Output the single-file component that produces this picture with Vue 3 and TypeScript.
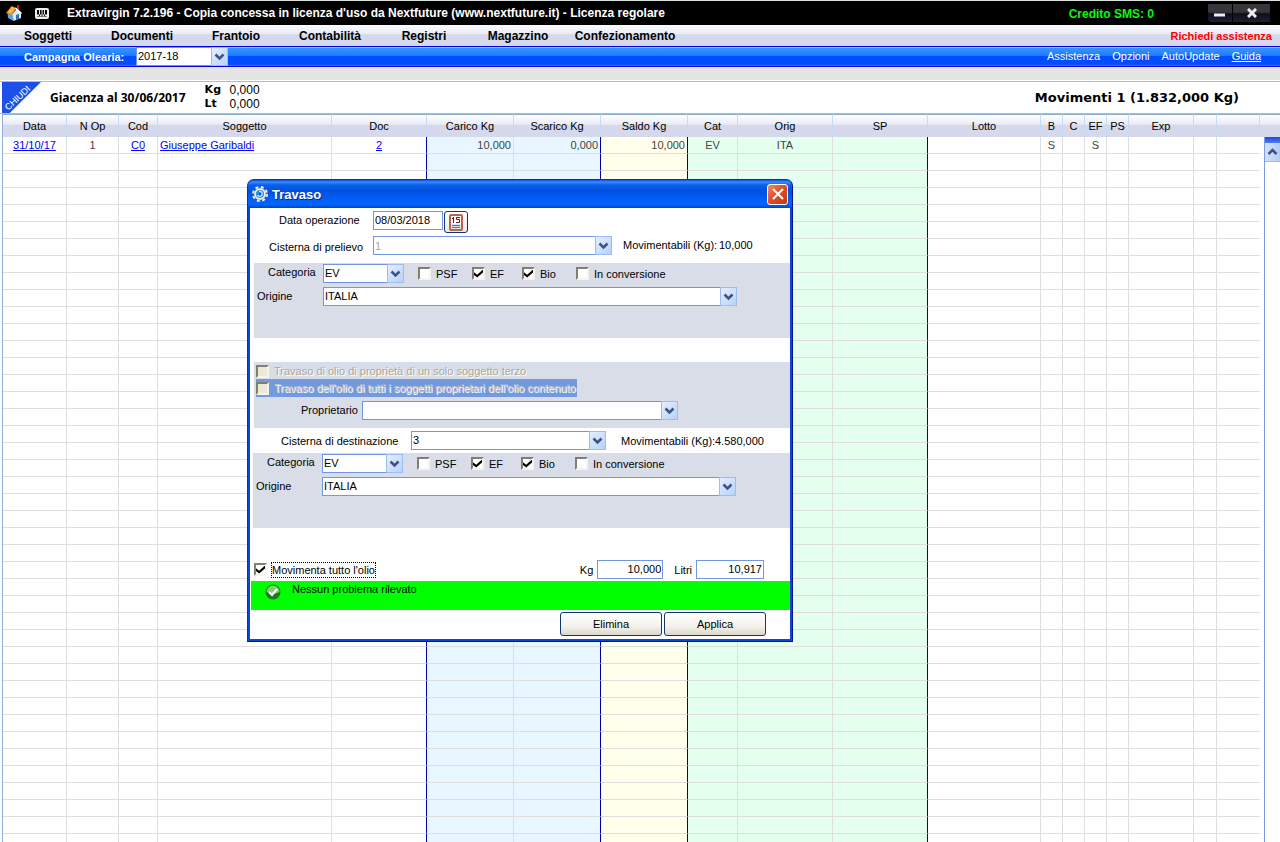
<script setup lang="ts">
import { ref } from 'vue'

interface Column {
  key: string
  label: string
  width?: number
  align?: 'right' | 'left'
  tint?: 'blue' | 'yellow' | 'green'
  strong?: boolean
  link?: boolean
}

const menu: string[] = ['Soggetti', 'Documenti', 'Frantoio', 'Contabilità', 'Registri', 'Magazzino', 'Confezionamento']
const links: string[] = ['Assistenza', 'Opzioni', 'AutoUpdate', 'Guida']

const columns: Column[] = [
  { key: 'data', label: 'Data', width: 64, link: true },
  { key: 'nop', label: 'N Op', width: 52 },
  { key: 'cod', label: 'Cod', width: 39, link: true },
  { key: 'soggetto', label: 'Soggetto', width: 174, align: 'left', link: true },
  { key: 'doc', label: 'Doc', width: 95, strong: true, link: true },
  { key: 'carico', label: 'Carico Kg', width: 87, align: 'right', tint: 'blue' },
  { key: 'scarico', label: 'Scarico Kg', width: 87, align: 'right', tint: 'blue', strong: true },
  { key: 'saldo', label: 'Saldo Kg', width: 87, align: 'right', tint: 'yellow', strong: true },
  { key: 'cat', label: 'Cat', width: 50, tint: 'green' },
  { key: 'orig', label: 'Orig', width: 95, tint: 'green' },
  { key: 'sp', label: 'SP', width: 95, tint: 'green', strong: true },
  { key: 'lotto', label: 'Lotto' },
  { key: 'b', label: 'B', width: 22 },
  { key: 'c', label: 'C', width: 22 },
  { key: 'ef', label: 'EF', width: 22 },
  { key: 'ps', label: 'PS', width: 22 },
  { key: 'exp', label: 'Exp', width: 65 },
  { key: 'x1', label: '', width: 23 },
  { key: 'x2', label: '', width: 43 },
]

const movement: Record<string, string> = {
  data: '31/10/17', nop: '1', cod: 'C0', soggetto: 'Giuseppe Garibaldi', doc: '2',
  carico: '10,000', scarico: '0,000', saldo: '10,000', cat: 'EV', orig: 'ITA', b: 'S', ef: 'S',
}
const rows: Record<string, string>[] = [movement, ...Array.from({ length: 41 }, () => ({}))]

const source = ref({ psf: false, ef: true, bio: true, conv: false })
const target = ref({ psf: false, ef: true, bio: true, conv: false })
const moveAll = ref(true)
</script>

<template>
  <div class="app">
    <header class="titlebar">
      <svg class="home" viewBox="0 0 16 16" width="16" height="16" aria-hidden="true">
        <rect x="11" y="0" width="2" height="6" fill="#d01818" />
        <path d="M1.500 8 L7 9 L7.500 16 L2 13Z" fill="#5ba3e6" />
        <path d="M6.500 9 L10.500 4 L15 8 L15 13 L7.500 16Z" fill="#d9ecfb" />
        <path d="M10 10 L13 9 V14 L10 15Z" fill="#2f6fb8" />
        <path d="M0 8 L5.500 1 L10.500 3 L6 10Z" fill="#f08a1c" />
        <path d="M1.500 7.500 L6 2 L9 3.200 L5 8.500Z" fill="#ffb648" />
        <path d="M9.500 3 L15.500 8.500" stroke="#fff" stroke-width="1.500" fill="none" />
      </svg>
      <svg class="port" viewBox="0 0 14 11" width="14" height="11" aria-hidden="true">
        <rect x="1" y="1" width="12" height="9" rx="1" fill="#000" stroke="#eee" stroke-width="2" />
        <path d="M4.500 1v5M7 1v5M9.500 1v5" stroke="#eee" stroke-width="1" />
        <path d="M2 7.500h10" stroke="#eee" stroke-width="2" />
        <path d="M4 7.500h1M6.500 7.500h1M9 7.500h1" stroke="#111" />
      </svg>
      <h1>Extravirgin 7.2.196 - Copia concessa in licenza d'uso da Nextfuture (www.nextfuture.it) - Licenza regolare</h1>
      <span class="credit">Credito SMS: 0</span>
      <div class="winbtns">
        <button type="button" aria-label="Riduci a icona"><svg viewBox="0 0 12 10" width="12" height="10"><path d="M0 7h11" stroke="#eee" stroke-width="3" /></svg></button>
        <button type="button" aria-label="Chiudi programma"><svg viewBox="0 0 10 10" width="10" height="10"><path d="M1 1l8 8M9 1l-8 8" stroke="#eee" stroke-width="3" /></svg></button>
      </div>
    </header>

    <nav class="menubar">
      <button v-for="m in menu" :key="m" type="button">{{ m }}</button>
      <a class="help" href="#">Richiedi assistenza</a>
    </nav>

    <div class="bluebar">
      <label for="campagna">Campagna Olearia:</label>
      <span class="combo season">
        <select id="campagna"><option>2017-18</option></select>
        <span class="drop"><svg viewBox="0 0 11 8" width="11" height="8"><path d="M1.500 1.500l4 4 4-4" /></svg></span>
      </span>
      <div class="links">
        <a v-for="l in links" :key="l" href="#" :class="{ under: l === 'Guida' }">{{ l }}</a>
      </div>
    </div>

    <div class="strip"></div>

    <section class="summary">
      <button type="button" class="corner"><span>CHIUDI</span></button>
      <strong class="stock">Giacenza al 30/06/2017</strong>
      <dl>
        <dt>Kg</dt><dd>0,000</dd>
        <dt>Lt</dt><dd>0,000</dd>
      </dl>
      <strong class="moves">Movimenti 1 (1.832,000 Kg)</strong>
    </section>

    <main class="grid">
      <table>
        <colgroup>
          <col v-for="c in columns" :key="c.key" :style="c.width ? { width: c.width + 'px' } : {}" />
        </colgroup>
        <thead>
          <tr><th v-for="c in columns" :key="c.key" scope="col">{{ c.label }}</th></tr>
        </thead>
        <tbody>
          <tr v-for="(r, i) in rows" :key="i">
            <td v-for="c in columns" :key="c.key" :class="[c.tint, c.align, { strong: c.strong }]">
              <a v-if="c.link && r[c.key]" href="#">{{ r[c.key] }}</a>
              <template v-else>{{ r[c.key] }}</template>
            </td>
          </tr>
        </tbody>
      </table>
      <div class="side">
        <div class="sidehead"></div>
        <div class="scroll">
          <div class="cap"></div>
          <button type="button" aria-label="Scorri in alto"><svg viewBox="0 0 11 8" width="11" height="8"><path d="M1.500 6l4-4 4 4" fill="none" stroke="#3d5285" stroke-width="2.500" /></svg></button>
        </div>
      </div>
    </main>

    <form class="dialog" role="dialog" aria-labelledby="dlg-title" @submit.prevent>
      <div class="caption">
        <svg viewBox="0 0 16 16" width="16" height="16" aria-hidden="true">
          <circle cx="8" cy="8" r="6.500" fill="none" stroke="#f2f0e6" stroke-width="3" stroke-dasharray="2.700 2.405" />
          <circle cx="8" cy="8" r="6" fill="#f2f0e6" stroke="#8c8a80" stroke-width=".5" />
          <circle cx="8" cy="8" r="4" fill="#1f8cf2" />
          <path d="M7 5.500a2.500 2.500 0 1 1-1.500 3.500" fill="none" stroke="#c8ecff" stroke-width="1.200" />
          <circle cx="8" cy="8" r="1" fill="#08468f" />
        </svg>
        <h2 id="dlg-title">Travaso</h2>
        <button type="button" class="close" aria-label="Chiudi"><svg viewBox="0 0 12 12" width="12" height="12"><path d="M1 1l10 10M11 1l-10 10" stroke="#fff" stroke-width="2" /></svg></button>
      </div>

      <div class="body">
        <div class="row date">
          <label for="data">Data operazione</label>
          <input id="data" type="text" value="08/03/2018" />
          <button type="button" class="calendar" aria-label="Calendario">
            <svg viewBox="0 0 14 17" width="14" height="17">
              <rect x="1" y="1" width="12" height="15" rx="1" fill="#dfe6f4" stroke="#b8644c" stroke-width="2" />
              <rect x="2" y="2" width="10" height="8" fill="#fff" />
              <path d="M3 4.500h1.500M4.500 3v6M11 3.500H7.500v2H10.500v3H7" fill="none" stroke="#8c1018" />
              <path d="M3 11.500h8M3 13.500h8" stroke="#5a6a94" />
            </svg>
          </button>
        </div>

        <div class="row tank">
          <label for="prelievo">Cisterna di prelievo</label>
          <span class="combo">
            <select id="prelievo" disabled><option>1</option></select>
            <span class="drop"><svg viewBox="0 0 11 8" width="11" height="8"><path d="M1.500 1.500l4 4 4-4" /></svg></span>
          </span>
          <span class="avail">Movimentabili (Kg):</span><output>10,000</output>
        </div>

        <fieldset class="panel">
          <div class="row cat">
            <label for="cat1">Categoria</label>
            <span class="combo">
              <select id="cat1"><option>EV</option></select>
              <span class="drop"><svg viewBox="0 0 11 8" width="11" height="8"><path d="M1.500 1.500l4 4 4-4" /></svg></span>
            </span>
            <label class="check"><input v-model="source.psf" type="checkbox" />PSF</label>
            <label class="check"><input v-model="source.ef" type="checkbox" />EF</label>
            <label class="check"><input v-model="source.bio" type="checkbox" />Bio</label>
            <label class="check"><input v-model="source.conv" type="checkbox" />In conversione</label>
          </div>
          <div class="row origin">
            <label for="orig1">Origine</label>
            <span class="combo">
              <select id="orig1"><option>ITALIA</option></select>
              <span class="drop"><svg viewBox="0 0 11 8" width="11" height="8"><path d="M1.500 1.500l4 4 4-4" /></svg></span>
            </span>
          </div>
        </fieldset>

        <fieldset class="panel owners">
          <label class="check off"><input type="checkbox" disabled />Travaso di olio di proprietà di un solo soggetto terzo</label>
          <label class="check off picked"><input type="checkbox" disabled />Travaso dell'olio di tutti i soggetti proprietari dell'olio contenuto</label>
          <div class="row owner">
            <label for="prop">Proprietario</label>
            <span class="combo">
              <select id="prop"><option></option></select>
              <span class="drop"><svg viewBox="0 0 11 8" width="11" height="8"><path d="M1.500 1.500l4 4 4-4" /></svg></span>
            </span>
          </div>
        </fieldset>

        <div class="row dest">
          <label for="dest">Cisterna di destinazione</label>
          <span class="combo">
            <select id="dest"><option>3</option></select>
            <span class="drop"><svg viewBox="0 0 11 8" width="11" height="8"><path d="M1.500 1.500l4 4 4-4" /></svg></span>
          </span>
          <span class="avail">Movimentabili (Kg):</span><output>4.580,000</output>
        </div>

        <fieldset class="panel second">
          <div class="row cat">
            <label for="cat2">Categoria</label>
            <span class="combo">
              <select id="cat2"><option>EV</option></select>
              <span class="drop"><svg viewBox="0 0 11 8" width="11" height="8"><path d="M1.500 1.500l4 4 4-4" /></svg></span>
            </span>
            <label class="check"><input v-model="target.psf" type="checkbox" />PSF</label>
            <label class="check"><input v-model="target.ef" type="checkbox" />EF</label>
            <label class="check"><input v-model="target.bio" type="checkbox" />Bio</label>
            <label class="check"><input v-model="target.conv" type="checkbox" />In conversione</label>
          </div>
          <div class="row origin">
            <label for="orig2">Origine</label>
            <span class="combo">
              <select id="orig2"><option>ITALIA</option></select>
              <span class="drop"><svg viewBox="0 0 11 8" width="11" height="8"><path d="M1.500 1.500l4 4 4-4" /></svg></span>
            </span>
          </div>
        </fieldset>

        <div class="row totals">
          <label class="check"><input v-model="moveAll" type="checkbox" /><span class="focus">Movimenta tutto l'olio</span></label>
          <label for="kg">Kg</label>
          <input id="kg" type="text" value="10,000" />
          <label for="litri">Litri</label>
          <input id="litri" type="text" value="10,917" />
        </div>

        <div class="status" role="status">
          <svg viewBox="0 0 16 16" width="16" height="16" aria-hidden="true">
            <circle cx="8" cy="8" r="7.500" fill="#1f7a1f" />
            <path d="M1.500 8a6.500 6.500 0 0 1 13 0q-6.500 3-13 0z" fill="#7fce72" />
            <path d="M4 8l3 3 5-6" fill="none" stroke="#fff" stroke-width="2" />
          </svg>
          <span>Nessun problema rilevato</span>
        </div>

        <div class="actions">
          <button type="button">Elimina</button>
          <button type="submit">Applica</button>
        </div>
      </div>
    </form>
  </div>
</template>

<style>
body { margin: 0; background: #fff; }
</style>

<style scoped>
* { box-sizing: border-box; }
.app {
  position: relative;
  height: 100vh;
  overflow: hidden;
  display: flex;
  flex-direction: column;
  background: #fff;
  color: #000;
  font: 11px/14px "Liberation Sans", Arial, sans-serif;
}
button, input, select { font: inherit; color: inherit; margin: 0; padding: 0; border-radius: 0; }
button { border: 0; background: none; }
h1, h2, dl, dd { margin: 0; }
svg { display: block; flex: none; }

.titlebar {
  flex: none;
  height: 25px;
  border-top: 1px solid #dfe3df;
  background: #000;
  color: #fff;
  display: flex;
  align-items: center;
  padding: 0 10px 0 6px;
  font-size: 12px;
}
.port { margin-left: 13px; }
h1 { margin-left: 18px; white-space: nowrap; font-size: 12px; }
.credit { margin-left: auto; color: #0f0; font-weight: bold; padding-top: 2px; }
.winbtns { display: flex; gap: 1px; margin-left: 54px; }
.winbtns button {
  height: 18px;
  display: grid;
  place-items: center;
  background: linear-gradient(#36363c 0 45%, #0d0f18 55%, #1b2233);
}
.winbtns button:first-child { width: 24px; border-bottom-left-radius: 4px; }
.winbtns button:last-child { width: 37px; }

.menubar {
  flex: none;
  height: 21px;
  display: flex;
  align-items: center;
  padding: 0 8px 0 1px;
  background: linear-gradient(#fbfbfe, #e9ebf6 42%, #d5d9eb 46%, #d5d9eb);
}
.menubar button { width: 94px; height: 20px; font-size: 12px; font-weight: bold; text-align: center; }
.menubar button:nth-of-type(7) { width: 120px; }
.help { margin-left: auto; color: #f00; font-weight: bold; text-decoration: none; }

.bluebar {
  flex: none;
  height: 21px;
  border-top: 1px solid #0000e0;
  border-bottom: 1px solid #0000e0;
  background: linear-gradient(#9dbdff 0 1px, #3797ff 1px, #1e7bff 45%, #004cff 50%, #004cff 90%, #2c7bff);
  color: #fff;
  display: flex;
  align-items: center;
  padding: 0 19px 0 24px;
}
.bluebar label { font-weight: bold; width: 112px; }
.season { width: 92px; color: #000; }
.season select { border-color: #fff; }
.links { display: flex; gap: 12px; margin-left: auto; padding-bottom: 2px; }
.links a { color: #fff; text-decoration: none; }
.links .under { text-decoration: underline; }

.strip { flex: none; height: 15px; background: #e5e5e5; border-bottom: 1px solid #b9b9b9; box-shadow: inset 0 -1px #fff; }

.summary {
  flex: none;
  height: 32px;
  display: flex;
  align-items: center;
  padding: 0 41px 0 2px;
  border-bottom: 1px solid #b9b9b9;
  font-family: "DejaVu Sans", Verdana, sans-serif;
}
.corner {
  width: 39px;
  height: 31px;
  align-self: end;
  display: grid;
  place-items: center;
  background: #1c50e8;
  clip-path: polygon(0 0, 100% 0, 20% 100%, 0 100%);
  color: #fff;
  font: 9px/10px "Liberation Sans", Arial, sans-serif;
}
.corner span { transform: rotate(-43deg); margin-right: 8px; }
.stock { margin-left: 9px; white-space: nowrap; font-family: "Noto Sans", sans-serif; font-size: 12px; }
.summary dl {
  display: grid;
  grid-template-columns: 25px auto;
  margin-left: 19px;
  padding-bottom: 2px;
  line-height: 14px;
}
.summary dt { font-weight: bold; }
.summary dd { font: 12px/14px "Liberation Sans", Arial, sans-serif; }
.moves { margin-left: auto; font-size: 13px; }

.grid { flex: 1; min-height: 0; display: flex; margin-left: 2px; border-left: 1px solid #8fb0d8; overflow: hidden; }
table { flex: 1; width: 0; height: max-content; table-layout: fixed; border-collapse: separate; border-spacing: 0; }
th, .sidehead {
  height: 23px;
  border-top: 1px solid #8aaed0;
  background: linear-gradient(#fff, #e9ebf6 42%, #d5d9eb 46%, #d5d9eb);
}
th { padding: 0; font-weight: normal; border-right: 1px solid #c8dbf5; white-space: nowrap; }
td {
  height: 17px;
  padding: 0 2px;
  line-height: 16px;
  text-align: center;
  white-space: nowrap;
  color: #444;
  border-right: 1px solid #dedede;
  border-bottom: 1px solid #dedede;
}
td:last-child { border-right-color: transparent; }
td.left { text-align: left; }
td.right { text-align: right; }
td.blue { background: #e8f7ff; }
td.yellow { background: #ffffec; }
td.green { background: #e4ffee; }
td.strong { border-right-color: #0000a8; }
td a { color: #00f; }
.side { flex: none; width: 20px; display: flex; flex-direction: column; }
.sidehead { flex: none; }
.scroll { flex: 1; margin-left: 4px; border-left: 1px solid #7a9be6; }
.cap { height: 6px; background: linear-gradient(#2344d8, #4c7cf2); }
.scroll button {
  width: 15px;
  height: 19px;
  display: grid;
  place-items: center;
  background: linear-gradient(90deg, #d4e3fb, #b4cbf6);
  border-bottom: 1px solid #9fbbe8;
}

.combo { display: grid; height: 19px; }
.combo > * { grid-area: 1 / 1; }
.combo select {
  appearance: none;
  width: 100%;
  height: 19px;
  border: 1px solid #7296df;
  background: #fff;
  padding: 0 18px 2px 1px;
  outline: 0;
}
.combo select:disabled { color: #aca899; opacity: 1; }
.drop {
  justify-self: end;
  width: 17px;
  height: 19px;
  display: grid;
  place-items: center;
  pointer-events: none;
  border: 1px solid #9fbcf2;
  background: linear-gradient(135deg, #e4efff, #b9d1f8);
}
.drop path { fill: none; stroke: #3d5285; stroke-width: 2.500; }

.dialog {
  position: absolute;
  left: 247px;
  top: 179px;
  width: 546px;
  background: #0a46d8;
  border: 1px solid #0831b8;
  border-bottom-color: #00138c;
  border-right-color: #00138c;
  border-radius: 7px 7px 0 0;
  padding: 0 2px 2px;
}
.caption {
  height: 28px;
  margin: 0 -2px;
  padding: 0 4px;
  display: flex;
  align-items: center;
  border-radius: 6px 6px 0 0;
  background: linear-gradient(#0a50d8, #3a8bff 7%, #0a5fe8 18%, #0050e0 40%, #0062fb 75%, #0066ff 88%, #0040c0);
  color: #fff;
}
h2 { margin-left: 4px; font: bold 13px/16px "Liberation Sans", Arial, sans-serif; text-shadow: 1px 1px #0a2a80; padding-top: 2px; }
.close {
  width: 21px;
  height: 21px;
  margin-left: auto;
  display: grid;
  place-items: center;
  border: 1px solid #fff;
  border-radius: 3px;
  background: linear-gradient(135deg, #ee8e70, #e0502a 45%, #c03810);
}
.body { background: #fff; padding-bottom: 3px; }
.row { display: flex; align-items: center; }
.row > label { white-space: nowrap; }
input[type="text"] { height: 19px; border: 1px solid #7296df; background: #fff; padding: 0 1px 2px; outline: 0; }

.date { height: 26px; padding: 3px 0 0 29px; align-items: flex-start; line-height: 18px; }
.date label { width: 94px; }
.date input { width: 70px; }
.calendar {
  width: 24px;
  height: 22px;
  margin-left: 1px;
  display: grid;
  place-items: center;
  border: 1px solid #10386f;
  border-radius: 3px;
  background: linear-gradient(#fff, #ece9df);
}
.tank { height: 29px; padding: 2px 0 0 19px; align-items: flex-start; line-height: 18px; }
.tank > label { width: 104px; line-height: 22px; }
.tank .combo { width: 239px; }
.avail { width: 96px; margin-left: 11px; white-space: nowrap; }
.panel { margin: 0 0 0 4px; padding: 1px 0 0; border: 0; min-width: 0; height: 75px; background: #d9dde8; }
.cat { height: 19px; padding-left: 14px; }
.cat > label:first-child { width: 55px; padding-bottom: 3px; }
.cat .combo { width: 81px; margin-right: 14px; }
.check { display: flex; align-items: center; gap: 5px; white-space: nowrap; line-height: 12px; }
.cat .check { width: 54px; }
.cat .check:nth-of-type(3) { width: 50px; }
.check input {
  appearance: none;
  flex: none;
  width: 13px;
  height: 13px;
  display: grid;
  place-items: center;
  border: 2px solid;
  border-color: #827e72 #f5f3ea #f5f3ea #827e72;
  background: #fff;
}
.check input:checked::before {
  content: "";
  width: 9px;
  height: 8px;
  background: #000;
  clip-path: polygon(0 35%, 35% 65%, 100% 0, 100% 38%, 35% 100%, 0 70%);
}
.check input:disabled { background: #ece9d8; }
.origin { height: 19px; margin-top: 4px; padding-left: 3px; }
.origin > label { width: 66px; padding-bottom: 2px; }
.origin .combo { width: 414px; }
.owners { height: 66px; margin-top: 24px; padding-left: 2px; }
.off { height: 18px; color: #aca899; text-shadow: 1px 1px #fff; }
.off:first-child { height: 16px; }
.off.picked { width: max-content; padding-right: 1px; background: #7399de; color: #c9c7bd; }
.owner { margin-top: 4px; padding-left: 45px; }
.owner > label { width: 61px; padding-bottom: 2px; }
.owner .combo { width: 316px; }
.dest { height: 25px; padding-left: 31px; }
.dest > label { width: 130px; }
.dest .combo { width: 195px; }
.dest .avail { margin-left: 15px; width: 94px; }
.second { margin-left: 3px; }
.totals { height: 19px; margin-top: 32px; padding: 0 26px 0 4px; }
.totals > label { margin-right: 4px; }
.totals > .check { margin-right: auto; }
.focus { outline: 1px dotted #000; line-height: 14px; }
.totals input[type="text"] { text-align: right; width: 66px; }
.totals input[type="text"]:last-child { width: 68px; }
.totals #kg { margin-right: 11px; }
.status { height: 29px; margin: 2px 0 0 1px; padding: 3px 14px; display: flex; gap: 11px; background: #0f0; align-items: flex-start; line-height: 11px; }
.actions { display: flex; justify-content: flex-end; gap: 2px; padding: 2px 24px 0 0; }
.actions button {
  width: 102px;
  height: 24px;
  border: 1px solid #10386f;
  border-radius: 3px;
  background: linear-gradient(#fff, #f3f2ec 60%, #dcd8cc);
}
</style>
